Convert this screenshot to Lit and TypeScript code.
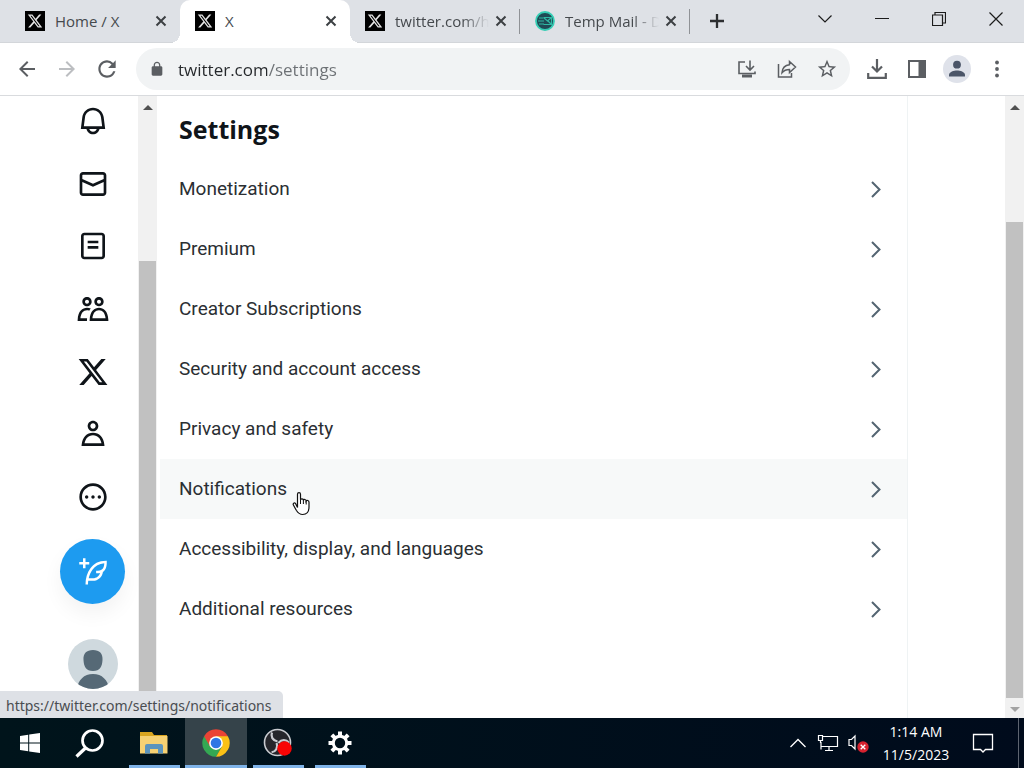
import { LitElement, html, css, svg, nothing, TemplateResult } from "lit";
import { customElement } from "lit/decorators.js";
import { classMap } from "lit/directives/class-map.js";

const glyph = (d: string, size = 24) => html`
  <svg width=${size} height=${size} viewBox="0 0 24 24" fill="currentColor" fill-rule="evenodd" aria-hidden="true">
    <path d=${d}></path>
  </svg>`;

const X_LOGO =
  "M18.244 2.25h3.308l-7.227 8.26 8.502 11.24H16.17l-5.214-6.817L4.99 21.75H1.68l7.73-8.835L1.254 2.25H8.08l4.713 6.231zm-1.161 17.52h1.833L7.084 4.126H5.117z";

const xFavicon = html`
  <svg width="20" height="20" viewBox="0 0 20 20" aria-hidden="true">
    <rect width="20" height="20" fill="#000"></rect>
    <g transform="translate(2 2) scale(.667)"><path fill="#e4e4e4" fill-rule="evenodd" d=${X_LOGO}></path></g>
  </svg>`;

const mailFavicon = html`
  <svg width="20" height="20" viewBox="0 0 20 20" aria-hidden="true">
    <circle cx="10" cy="10" r="9" fill="#1f4a55" stroke="#35cdb4" stroke-width="1.800"></circle>
    <path d="M8.500 6.500h8v7h-8M8.500 6.500l4 3.500 4-3.500M13 10l3.500 3.500M4 7h4M3 10h6M4 13h5" fill="none" stroke="#2fb8a4" stroke-width="1.200"></path>
  </svg>`;

const NAV: [string, string][] = [
  ["Notifications", "M19.993 9.042C19.48 5.017 16.054 2 11.996 2s-7.49 3.021-7.999 7.051L2.866 18H7.1c.463 2.282 2.481 4 4.9 4s4.437-1.718 4.9-4h4.236l-1.143-8.958zM12 20c-1.306 0-2.417-.835-2.829-2h5.658c-.412 1.165-1.523 2-2.829 2zm-6.866-4l.847-6.698C6.364 6.272 8.941 4 11.996 4s5.627 2.268 6.013 5.295L18.864 16H5.134z"],
  ["Messages", "M1.998 5.5c0-1.381 1.119-2.5 2.5-2.5h15c1.381 0 2.5 1.119 2.5 2.5v13c0 1.381-1.119 2.5-2.5 2.5h-15c-1.381 0-2.5-1.119-2.5-2.5v-13zm2.5-.5c-.276 0-.5.224-.5.5v2.764l8 3.638 8-3.636V5.5c0-.276-.224-.5-.5-.5h-15zm15.5 5.463l-8 3.636-8-3.638V18.5c0 .276.224.5.5.5h15c.276 0 .5-.224.5-.5v-8.037z"],
  ["Lists", "M3 4.5C3 3.12 4.12 2 5.5 2h13C19.88 2 21 3.12 21 4.5v15c0 1.38-1.12 2.5-2.5 2.5h-13C4.12 22 3 20.88 3 19.5v-15zM5.5 4c-.28 0-.5.22-.5.5v15c0 .28.22.5.5.5h13c.28 0 .5-.22.5-.5v-15c0-.28-.22-.5-.5-.5h-13zM16 10H8V8h8v2zm-8 2h8v2H8v-2z"],
  ["Communities", "M7.501 19.917L7.471 21H.472l.029-1.027c.184-6.618 3.736-8.977 7-8.977.963 0 1.95.212 2.87.672-.444.478-.851 1.03-1.212 1.656-.507-.204-1.054-.329-1.658-.329-2.767 0-4.57 2.223-4.938 6.004H7.56c-.023.302-.05.599-.059.918zm15.998.056L23.528 21H9.472l.029-1.027c.184-6.618 3.736-8.977 7-8.977s6.816 2.358 7 8.977zM21.437 19c-.367-3.781-2.17-6.004-4.938-6.004s-4.57 2.223-4.938 6.004h9.875zm-4.938-9c-.799 0-1.527-.279-2.116-.73-.836-.64-1.384-1.638-1.384-2.77 0-1.93 1.567-3.5 3.5-3.5s3.5 1.57 3.5 3.5c0 1.132-.548 2.13-1.384 2.77-.589.451-1.317.73-2.116.73zm-1.5-3.5c0 .827.673 1.5 1.5 1.5s1.5-.673 1.5-1.5-.673-1.5-1.5-1.5-1.5.673-1.5 1.5zM7.5 3C9.433 3 11 4.57 11 6.5S9.433 10 7.5 10 4 8.43 4 6.5 5.567 3 7.5 3zm0 2C6.673 5 6 5.673 6 6.5S6.673 8 7.5 8 9 7.327 9 6.5 8.327 5 7.5 5z"],
  ["Premium", X_LOGO],
  ["Profile", "M5.651 19h12.698c-.337-1.8-1.023-3.21-1.945-4.19C15.318 13.65 13.838 13 12 13s-3.317.65-4.404 1.81c-.922.98-1.608 2.39-1.945 4.19zm.486-5.56C7.627 11.85 9.648 11 12 11s4.373.85 5.863 2.44c1.477 1.58 2.366 3.8 2.632 6.46l.11 1.1H3.395l.11-1.1c.266-2.66 1.155-4.88 2.632-6.46zM12 4c-1.105 0-2 .9-2 2s.895 2 2 2 2-.9 2-2-.895-2-2-2zM8 6c0-2.21 1.791-4 4-4s4 1.79 4 4-1.791 4-4 4-4-1.79-4-4z"],
  ["More", "M3.75 12c0-4.56 3.69-8.25 8.25-8.25s8.25 3.69 8.25 8.25-3.69 8.25-8.25 8.25S3.75 16.56 3.75 12zM12 1.75C6.34 1.75 1.75 6.34 1.75 12S6.34 22.25 12 22.25 22.25 17.66 22.25 12 17.66 1.75 12 1.75zm-4.75 11.5c.69 0 1.25-.56 1.25-1.25s-.56-1.25-1.25-1.25S6 11.31 6 12s.56 1.25 1.25 1.25zm9.5 0c.69 0 1.25-.56 1.25-1.25s-.56-1.25-1.25-1.25-1.25.56-1.25 1.25.56 1.25 1.25 1.25zM13.25 12c0 .69-.56 1.25-1.25 1.25s-1.25-.56-1.25-1.25.56-1.25 1.25-1.25 1.25.56 1.25 1.25z"],
];

const COMPOSE =
  "M23 3c-6.62-.1-10.38 2.421-13.05 6.03C7.29 12.61 6 17.331 6 22h2c0-1.007.07-2.012.19-3H12c4.1 0 7.48-3.082 7.94-7.054C22.79 10.147 23.17 6.359 23 3zm-7 8h-1.5v2H16c.63-.016 1.2-.08 1.72-.188C16.95 15.24 14.68 17 12 17H8.55c.57-2.512 1.57-4.851 3-6.78 2.16-2.912 5.29-4.911 9.45-5.187C20.95 8.079 19.9 11 16 11zM4 9V6H1V4h3V1h2v3h3v2H6v3H4z";

const SETTINGS = [
  "Monetization",
  "Premium",
  "Creator Subscriptions",
  "Security and account access",
  "Privacy and safety",
  "Notifications",
  "Accessibility, display, and languages",
  "Additional resources",
];

interface Tab {
  title: string;
  icon: TemplateResult;
  active?: boolean;
  divider?: boolean;
  fade?: boolean;
}

const TABS: Tab[] = [
  { title: "Home / X", icon: xFavicon },
  { title: "X", icon: xFavicon, active: true },
  { title: "twitter.com/h", icon: xFavicon, divider: true, fade: true },
  { title: "Temp Mail - D", icon: mailFavicon, divider: true, fade: true },
];

const shared = css`
  :host {
    display: block;
    font-family: "Open Sans", "Noto Sans", sans-serif;
  }
  * {
    box-sizing: border-box;
  }
  button {
    display: flex;
    align-items: center;
    justify-content: center;
    padding: 0;
    border: 0;
    background: none;
    color: inherit;
    font: inherit;
  }
  svg {
    display: block;
    flex: none;
  }
`;

@customElement("tab-strip")
class TabStrip extends LitElement {
  static styles = [
    shared,
    css`
      .strip {
        display: flex;
        height: 43px;
        padding-left: 10px;
        background: #dee1e6;
        border-bottom: 1px solid #d3d6da;
        color: #45494d;
      }
      .tab {
        display: flex;
        align-items: center;
        flex: 0 1 170px;
        min-width: 0;
        height: 42px;
        padding: 0 9px 0 15px;
        font-size: 15px;
      }
      .active {
        position: relative;
        height: 43px;
        padding-bottom: 1px;
        background: #fff;
        border-radius: 10px 10px 0 0;
      }
      .active::before,
      .active::after {
        content: "";
        position: absolute;
        bottom: 0;
        width: 10px;
        height: 10px;
      }
      .active::before {
        left: -10px;
        background: radial-gradient(circle at 0 0, transparent 10px, #fff 10px);
      }
      .active::after {
        right: -10px;
        background: radial-gradient(circle at 100% 0, transparent 10px, #fff 10px);
      }
      .title {
        flex: 1;
        min-width: 0;
        margin-left: 10px;
        white-space: nowrap;
      }
      .fade {
        mask-image: linear-gradient(to right, #000 70%, transparent 98%);
      }
      .close {
        width: 20px;
        height: 20px;
      }
      .divided {
        background: linear-gradient(#8f9296, #8f9296) right center / 1px 25px no-repeat;
      }
      .new {
        width: 53px;
      }
      .window {
        display: flex;
        margin-left: auto;
        color: #1c1c1c;
      }
      .window button {
        width: 57px;
        height: 38px;
      }
    `,
  ];

  render() {
    return html`
      <div class="strip">
        ${TABS.map(
          (t) => html`
            <div class=${classMap({ tab: true, active: !!t.active, divided: !!t.divider })}>
              ${t.icon}
              <span class=${classMap({ title: true, fade: !!t.fade })}>${t.title}</span>
              <button class="close" aria-label="Close tab">
                <svg width="12" height="12" viewBox="0 0 12 12"><path d="M1.500 1.500l9 9M10.500 1.500l-9 9" stroke="#3c4043" stroke-width="2"></path></svg>
              </button>
            </div>`
        )}
        <button class="new" aria-label="New tab">
          <svg width="16" height="16" viewBox="0 0 16 16"><path d="M8 1v14M1 8h14" stroke="#2d2f31" stroke-width="2.300"></path></svg>
        </button>
        <div class="window">
          <button aria-label="Search tabs"><svg width="14" height="14" viewBox="0 0 14 14"><path d="M.5 3.500L7 10l6.500-6.500" fill="none" stroke="currentColor" stroke-width="1.200"></path></svg></button>
          <button aria-label="Minimize"><svg width="14" height="14" viewBox="0 0 14 14"><path d="M0 6.500h14" stroke="currentColor"></path></svg></button>
          <button aria-label="Restore"><svg width="14" height="14" viewBox="0 0 14 14"><path d="M.5 3h10v10.500H.5zM3 3V.5h10.500V11h-3" fill="none" stroke="currentColor" stroke-width="1.200"></path></svg></button>
          <button aria-label="Close window"><svg width="14" height="14" viewBox="0 0 14 14"><path d="M.5.5l13 13M13.500.5l-13 13" stroke="currentColor" stroke-width="1.200"></path></svg></button>
        </div>
      </div>`;
  }
}

@customElement("tool-bar")
class ToolBar extends LitElement {
  static styles = [
    shared,
    css`
      .bar {
        display: flex;
        align-items: center;
        height: 53px;
        padding: 0 7px;
        background: #fff;
        border-bottom: 1px solid #d9dbde;
        color: #5b5e62;
      }
      button {
        width: 40px;
        height: 40px;
        flex: none;
      }
      .dim {
        color: #bcbec1;
      }
      .pill {
        display: flex;
        align-items: center;
        flex: 1;
        min-width: 0;
        height: 42px;
        margin: 0 7px 0 9px;
        padding: 0 3px 0 13px;
        border-radius: 21px;
        background: #f1f3f4;
      }
      .url {
        flex: 1;
        min-width: 0;
        margin-left: 13px;
        padding: 2px 0 0;
        border: 0;
        outline: 0;
        font: 17px/24px "Open Sans", sans-serif;
        background: linear-gradient(to right, #25282b 89px, #6c7074 89px);
        background-clip: text;
        -webkit-background-clip: text;
        -webkit-text-fill-color: transparent;
      }
    `,
  ];

  render() {
    return html`
      <div class="bar">
        <button aria-label="Back">${glyph("M20 11H7.83l5.59-5.59L12 4l-8 8 8 8 1.41-1.41L7.83 13H20v-2z")}</button>
        <button class="dim" aria-label="Forward">${glyph("M12 4l-1.410 1.410L16.170 11H4v2h12.170l-5.580 5.590L12 20l8-8z")}</button>
        <button aria-label="Reload">${glyph("M17.65 6.35A7.958 7.958 0 0 0 12 4c-4.42 0-7.99 3.58-7.99 8s3.57 8 7.99 8c3.73 0 6.84-2.55 7.73-6h-2.08A5.99 5.99 0 0 1 12 18c-3.31 0-6-2.69-6-6s2.69-6 6-6c1.66 0 3.14.69 4.22 1.78L13 11h7V4z", 26)}</button>
        <div class="pill">
          ${glyph("M18 8h-1V6c0-2.760-2.240-5-5-5S7 3.240 7 6v2H6c-1.100 0-2 .9-2 2v10c0 1.100.9 2 2 2h12c1.100 0 2-.9 2-2V10c0-1.100-.9-2-2-2zM15.100 8H8.900V6a3.100 3.100 0 0 1 6.200 0z", 16)}
          <input class="url" type="text" aria-label="Address" .value=${"twitter.com/settings"} />
          <button aria-label="Install"><svg width="20" height="20" viewBox="0 0 20 20" fill="none" stroke="currentColor" stroke-width="1.600"><path d="M8 3H2v11.500h16V12.500M13 1.500v9M9 7l4 4 4-4"></path><path d="M5 17h10" stroke-width="3"></path></svg></button>
          <button aria-label="Share"><svg width="20" height="20" viewBox="0 0 20 20" fill="none" stroke="currentColor" stroke-width="1.500"><path d="M1.500 5v13h13v-4M12.500 2.500l6 5.500-6 5.500v-3c-3.500 0-5.500.8-7.500 3.200.3-4.700 3-7.500 7.500-8z"></path></svg></button>
          <button aria-label="Bookmark">${glyph("M22 9.240l-7.190-.62L12 2 9.190 8.630 2 9.240l5.460 4.730L5.820 21 12 17.270 18.180 21l-1.630-7.030L22 9.240zM12 15.400l-3.760 2.270 1-4.280-3.320-2.880 4.380-.38L12 6.100l1.710 4.040 4.380.38-3.320 2.880 1 4.280L12 15.400z", 22)}</button>
        </div>
        <button aria-label="Downloads"><svg width="20" height="20" viewBox="0 0 20 20" fill="none" stroke="currentColor" stroke-width="2.200"><path d="M10 0v12M5 7.500l5 5 5-5M1.200 14v4.800h17.600V14"></path></svg></button>
        <button aria-label="Side panel"><svg width="18" height="18" viewBox="0 0 18 18"><path fill="currentColor" fill-rule="evenodd" d="M0 0h18v18H0zM2 2v14h8.500V2z"></path></svg></button>
        <button aria-label="Profile"><svg width="28" height="28" viewBox="0 0 28 28"><circle cx="14" cy="14" r="14" fill="#dfe2ea"></circle><circle cx="14" cy="9.700" r="3.900" fill="#4b5568"></circle><path d="M6 21.500v-1.700c0-2.800 5-4.300 8-4.300s8 1.500 8 4.300v1.700z" fill="#4b5568"></path></svg></button>
        <button aria-label="Menu"><svg width="6" height="18" viewBox="0 0 6 18" fill="currentColor"><circle cx="3" cy="2.500" r="1.900"></circle><circle cx="3" cy="9" r="1.900"></circle><circle cx="3" cy="15.500" r="1.900"></circle></svg></button>
      </div>`;
  }
}

@customElement("settings-page")
class SettingsPage extends LitElement {
  static styles = [
    shared,
    css`
      :host {
        flex: 1;
        min-height: 0;
      }
      .page {
        position: relative;
        display: flex;
        height: 100%;
        overflow: hidden;
        background: #fff;
        color: #0f1419;
      }
      .side {
        display: flex;
        flex-direction: column;
        align-items: center;
        flex: none;
        width: 138px;
        padding: 9px 0 0 47px;
      }
      .nav {
        display: flex;
        flex-direction: column;
        justify-content: space-between;
        flex: none;
        height: 408px;
      }
      .nav a {
        color: inherit;
      }
      .compose {
        flex: none;
        width: 65px;
        height: 65px;
        margin-top: 26px;
        border-radius: 50%;
        background: #1d9bf0;
        color: #fff;
        box-shadow: 0 10px 20px rgba(0, 0, 0, 0.05);
      }
      .avatar {
        flex: none;
        width: 50px;
        height: 50px;
        margin-top: 35px;
        border-radius: 50%;
        overflow: hidden;
      }
      .scroll {
        display: flex;
        flex-direction: column;
        align-items: center;
        flex: none;
        width: 19px;
        background: #f1f1f1;
      }
      .cap {
        display: flex;
        align-items: center;
        justify-content: center;
        height: 20px;
        padding-top: 3px;
      }
      .thumb {
        flex: 1;
        width: 17px;
        background: #c1c1c1;
      }
      .inner .thumb {
        margin-top: 145px;
      }
      .outer .thumb {
        margin-top: 106px;
      }
      .main {
        flex: 1;
        min-width: 0;
        margin: 0 97px 0 3px;
        border-right: 1px solid #eff3f4;
      }
      h1 {
        margin: 0;
        padding: 18px 19px 15px;
        font-size: 25px;
        line-height: 30px;
        font-weight: 700;
      }
      .row {
        display: flex;
        align-items: center;
        justify-content: space-between;
        height: 60px;
        padding: 0 19px;
        color: #2b2f33;
        font-family: Roboto, sans-serif;
        font-size: 19px;
        line-height: 24px;
        text-decoration: none;
      }
      .row svg {
        color: #536471;
      }
      .hover {
        background: #f7f9f9;
      }
      .cursor {
        position: absolute;
        left: 292px;
        top: 395px;
      }
      .status {
        position: absolute;
        left: 0;
        bottom: 0;
        height: 27px;
        padding: 0 12px 0 6px;
        border-radius: 0 5px 0 0;
        background: #dee1e6;
        color: #4a4d51;
        font: 14px/29px "Noto Sans", sans-serif;
        white-space: nowrap;
      }
    `,
  ];

  private cap(up: boolean, color: string) {
    return html`<div class="cap"><svg width="10" height="5" viewBox="0 0 10 5"><path d=${up ? "M0 5L5 0l5 5z" : "M0 0l5 5 5-5z"} fill=${color}></path></svg></div>`;
  }

  render() {
    return html`
      <div class="page">
        <aside class="side">
          <nav class="nav">
            ${NAV.map(([label, d]) => html`<a href="#" aria-label=${label}>${glyph(d, 32)}</a>`)}
          </nav>
          <button class="compose" aria-label="Post">${glyph(COMPOSE, 30)}</button>
          <button class="avatar" aria-label="Account">
            <svg width="50" height="50" viewBox="0 0 50 50"><rect width="50" height="50" fill="#cfd9de"></rect><path d="M25 11c6.500 0 10 3.500 9.500 10-.3 6.500-2.500 11-9.500 11s-9.200-4.500-9.500-11C15 14.500 18.500 11 25 11z" fill="#566976"></path><path d="M9 50c1-9 7-15 16-15s15 6 16 15z" fill="#566976"></path></svg>
          </button>
        </aside>
        <div class="scroll inner">${this.cap(true, "#505050")}<div class="thumb"></div></div>
        <main class="main">
          <h1>Settings</h1>
          ${SETTINGS.map(
            (s) => html`
              <a href="#" class=${classMap({ row: true, hover: s === "Notifications" })}>
                <span>${s}</span>
                <svg width="24" height="24" viewBox="0 0 24 24"><path d="M8 5l7.500 7.500L8 20" fill="none" stroke="currentColor" stroke-width="2"></path></svg>
              </a>`
          )}
        </main>
        <div class="scroll outer">${this.cap(true, "#505050")}<div class="thumb"></div>${this.cap(false, "#a3a3a3")}</div>
        <svg class="cursor" width="19" height="25" viewBox="0 0 19 25">
          <path d="M5.500 16.500V3.200c0-2.200 3-2.200 3 0v5.600c.3-1.500 2.900-1.300 2.900.4.500-1.200 2.700-.9 2.700.8.600-1 2.900-.8 2.900 1.200V16c0 5-2.500 7.500-6.300 7.500-3.400 0-4.900-1.700-6.400-4.200L1.400 14c-.8-1.500.9-2.700 2.100-1.600z" fill="#fff" stroke="#111" stroke-width="1.200"></path>
          <path d="M8.500 8.500V13M11.400 9v4M14.200 10v3.500" stroke="#111" fill="none"></path>
        </svg>
        <div class="status">https://twitter.com/settings/notifications</div>
      </div>`;
  }
}

@customElement("task-bar")
class TaskBar extends LitElement {
  static styles = [
    shared,
    css`
      .bar {
        display: flex;
        height: 50px;
        background: linear-gradient(to right, #00141b, #000b1c);
        color: #fff;
      }
      .system {
        width: 60px;
      }
      .system + .app {
        margin-left: 3px;
      }
      .app {
        width: 62px;
        background: linear-gradient(#7fb3e8, #7fb3e8) center bottom / 51px 3px no-repeat;
      }
      .current {
        background: linear-gradient(#7fb3e8, #7fb3e8) center bottom / 100% 3px no-repeat, #35434a;
      }
      .tray {
        display: flex;
        margin-left: auto;
      }
      .tray button {
        width: 30px;
      }
      .tray .clock {
        flex-direction: column;
        width: 86px;
        font-size: 14px;
        line-height: 23px;
      }
      .tray .notes {
        width: 48px;
        margin-right: 11px;
      }
      .tray .desk {
        width: 6px;
        border-left: 1px solid #5d6470;
      }
    `,
  ];

  render() {
    const teeth = [0, 45, 90, 135, 180, 225, 270, 315];
    return html`
      <div class="bar">
        <button class="system" aria-label="Start"><svg width="20" height="20" viewBox="0 0 20 20" fill="#fff"><path d="M0 2.900L8.200 1.700v7.800H0zM9.200 1.500L20 0v9.500H9.200zM0 10.500h8.200v7.800L0 17.100zM9.200 10.500H20V20L9.200 18.500z"></path></svg></button>
        <button class="system" aria-label="Search"><svg width="30" height="30" viewBox="0 0 30 30" fill="none" stroke="#fff"><circle cx="17.500" cy="12.500" r="10" stroke-width="2.700"></circle><path d="M10.500 20L1.500 28.500" stroke-width="3.200"></path></svg></button>
        <button class="app" aria-label="File Explorer"><svg width="28" height="24" viewBox="0 0 28 24"><path d="M0 1h12l2 3h13v18H0z" fill="#d9a520"></path><path d="M0 5h27.500v17.500H0z" fill="#f6d173"></path><path d="M5 22.500V15q0-2 2-2h14q2 0 2 2v7.500h-5V18h-8v4.500z" fill="#5b94bd"></path></svg></button>
        <button class="app current" aria-label="Chrome">
          <svg width="30" height="30" viewBox="0 0 48 48"><path d="M24 24L4.950 13A22 22 0 0 1 43.050 13z" fill="#ea4335"></path><path d="M24 24L24 46A22 22 0 0 1 4.950 13z" fill="#34a853"></path><path d="M14.500 29.500L4.950 13 24 13z" fill="#ea4335"></path><path d="M33.500 29.500L24 46l-9.500-16.500z" fill="#34a853"></path><path d="M33.500 29.500L24 46A22 22 0 0 0 43.050 13H24z" fill="#fbc116"></path><circle cx="24" cy="24" r="11" fill="#fff"></circle><circle cx="24" cy="24" r="8.500" fill="#2f76e5"></circle></svg>
        </button>
        <button class="app" aria-label="OBS Studio">
          <svg width="30" height="30" viewBox="0 0 30 30"><circle cx="14.500" cy="14.500" r="13" fill="#25262b" stroke="#c9cbd0" stroke-width="1.600"></circle><g fill="none" stroke="#c9cbd0" stroke-width="2.200">${[0, 120, 240].map((a) => svg`<path transform=${`rotate(${a} 14.500 14.500)`} d="M9 4.500c-1.500 4 .5 8 5.500 9"></path>`)}</g><circle cx="21.500" cy="20.500" r="7.200" fill="#f80404"></circle></svg>
        </button>
        <button class="app" aria-label="Settings">
          <svg width="24" height="24" viewBox="0 0 24 24"><circle cx="12" cy="12" r="6.700" fill="none" stroke="#fff" stroke-width="3"></circle>${teeth.map((a) => svg`<rect x="10" y="0.500" width="4" height="5" fill="#fff" transform=${`rotate(${a} 12 12)`}></rect>`)}</svg>
        </button>
        <div class="tray">
          <button aria-label="Show hidden icons"><svg width="16" height="10" viewBox="0 0 16 10"><path d="M.5 9L8 1.500 15.500 9" fill="none" stroke="#fff" stroke-width="1.300"></path></svg></button>
          <button aria-label="Network"><svg width="22" height="18" viewBox="0 0 22 18" fill="none" stroke="#fff" stroke-width="1.200"><path d="M6 2.500h14.500v10H4V8M4 12.500v3M8 16.500h8M12 12.500v4M1.500 1.500h4v5h-4zM3.500 6.500V9"></path></svg></button>
          <button aria-label="Volume muted"><svg width="22" height="20" viewBox="0 0 22 20"><path d="M2 6.500h2.500L8 3v13l-3.500-3.500H2z" fill="none" stroke="#fff" stroke-width="1.200"></path><circle cx="16" cy="14" r="5.700" fill="#d6222f"></circle><path d="M13.700 11.700l4.600 4.600M18.300 11.700l-4.600 4.600" stroke="#fff" stroke-width="1.300"></path></svg></button>
          <button class="clock"><span>1:14 AM</span><span>11/5/2023</span></button>
          <button class="notes" aria-label="Notifications"><svg width="22" height="22" viewBox="0 0 22 22"><path d="M1.500 2.500h19v15h-7L11 20l-2.500-2.500h-7z" fill="none" stroke="#fff" stroke-width="1.300"></path></svg></button>
          <button class="desk" aria-label="Show desktop">${nothing}</button>
        </div>
      </div>`;
  }
}

@customElement("app-root")
class AppRoot extends LitElement {
  static styles = css`
    :host {
      display: flex;
      flex-direction: column;
      height: 100vh;
      overflow: hidden;
    }
  `;

  render() {
    return html`
      <tab-strip></tab-strip>
      <tool-bar></tool-bar>
      <settings-page></settings-page>
      <task-bar></task-bar>`;
  }
}
